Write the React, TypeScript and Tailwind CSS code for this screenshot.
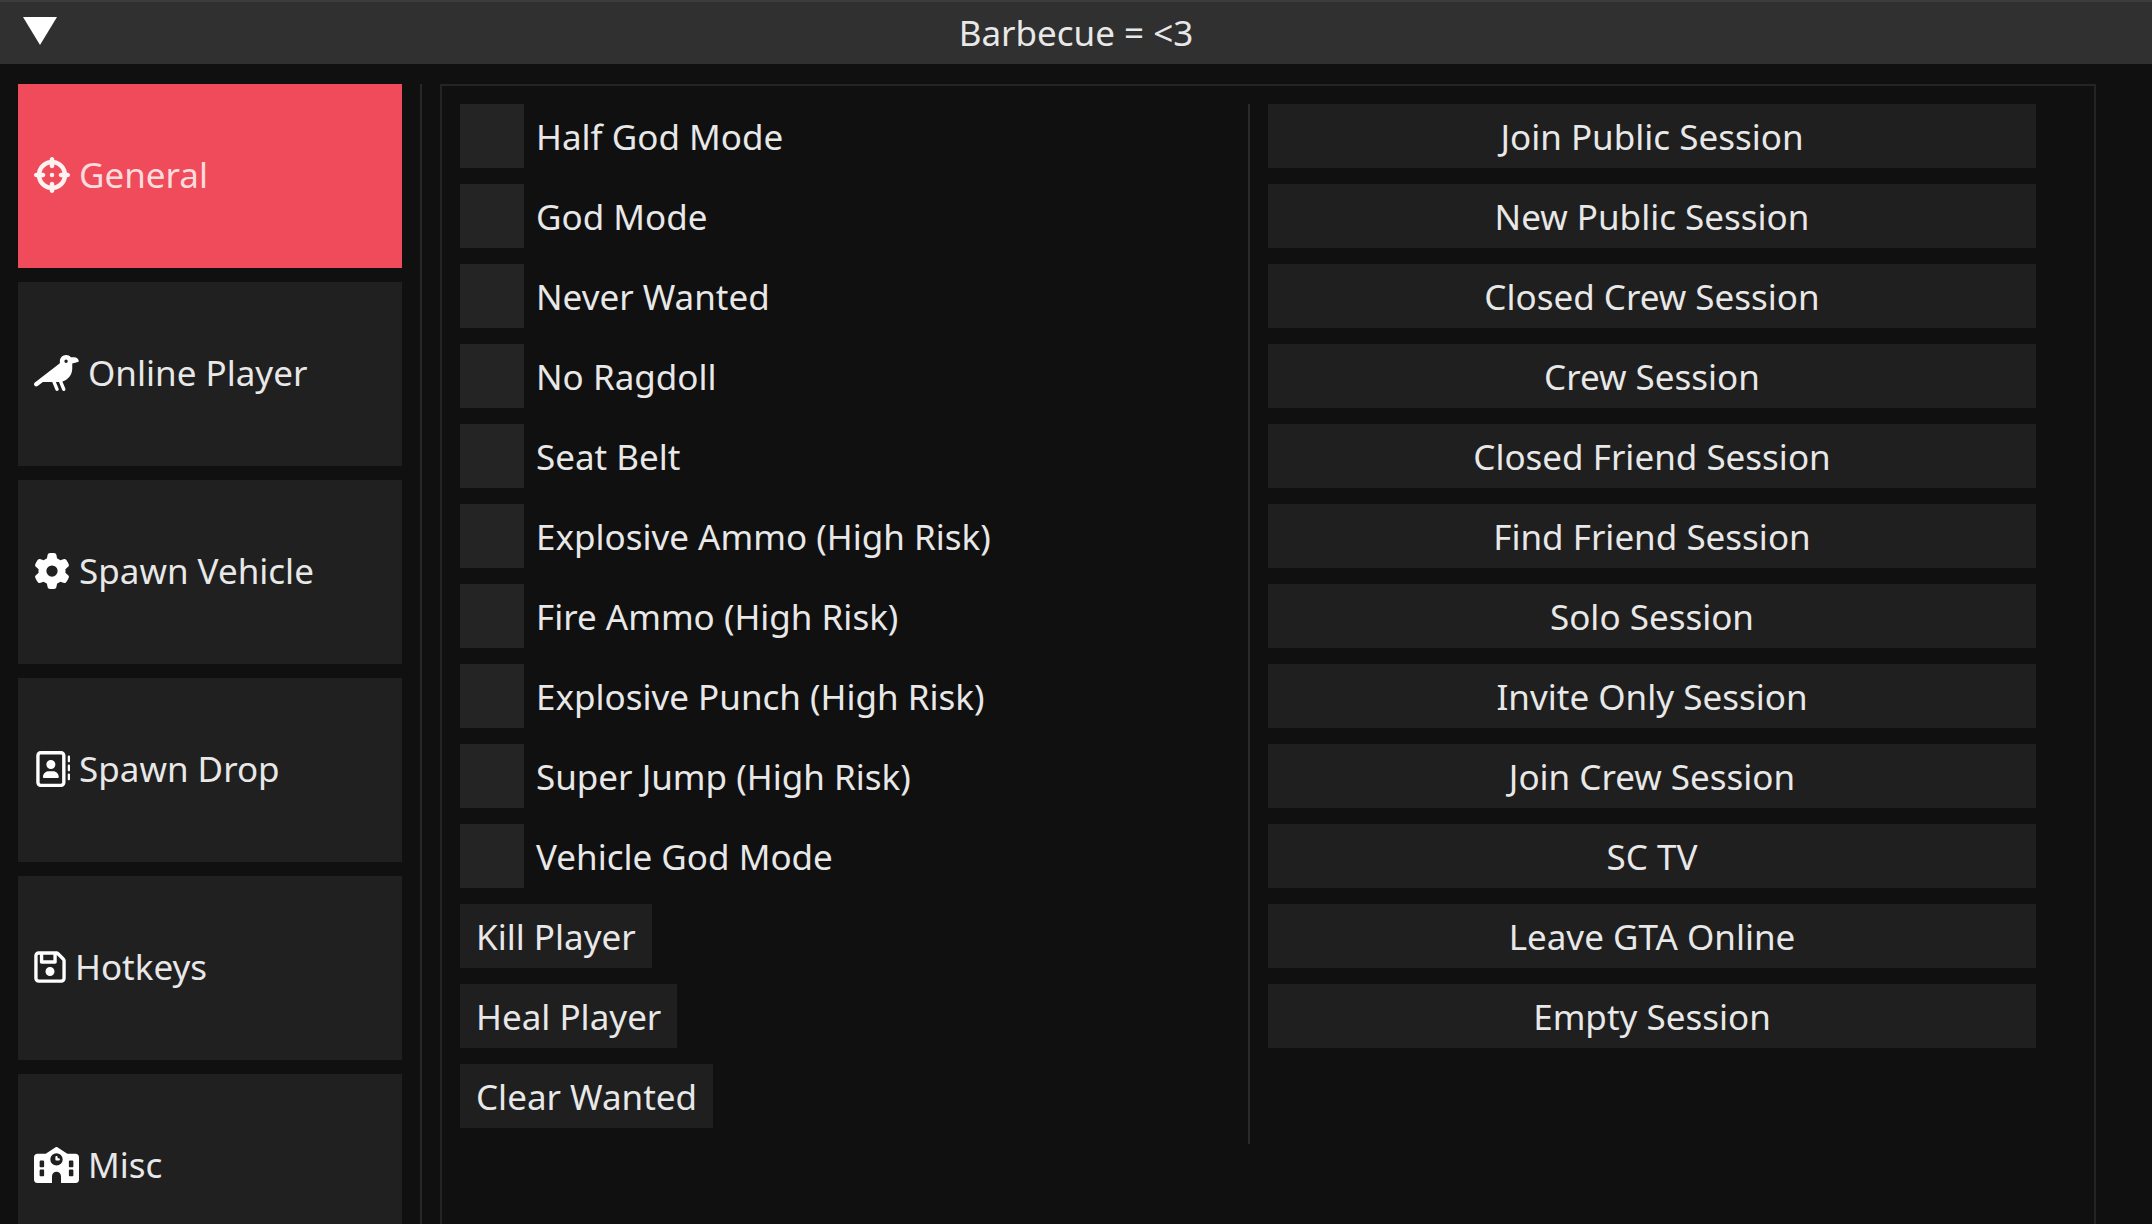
import { useState } from 'react'
import {
  FaCrosshairs,
  FaCrow,
  FaGear,
  FaRegAddressBook,
  FaRegFloppyDisk,
  FaSchool,
} from 'react-icons/fa6'

const tabs = [
  { name: 'General', icon: FaCrosshairs, size: 'h-9 w-9' },
  { name: 'Online Player', icon: FaCrow, size: 'h-9 w-[45px]' },
  { name: 'Spawn Vehicle', icon: FaGear, size: 'h-9 w-9' },
  { name: 'Spawn Drop', icon: FaRegAddressBook, size: 'h-9 w-9' },
  { name: 'Hotkeys', icon: FaRegFloppyDisk, size: 'h-9 w-8' },
  { name: 'Misc', icon: FaSchool, size: 'h-9 w-[45px]' },
]

const toggles = [
  'Half God Mode',
  'God Mode',
  'Never Wanted',
  'No Ragdoll',
  'Seat Belt',
  'Explosive Ammo (High Risk)',
  'Fire Ammo (High Risk)',
  'Explosive Punch (High Risk)',
  'Super Jump (High Risk)',
  'Vehicle God Mode',
]

const actions = ['Kill Player', 'Heal Player', 'Clear Wanted']

const sessions = [
  'Join Public Session',
  'New Public Session',
  'Closed Crew Session',
  'Crew Session',
  'Closed Friend Session',
  'Find Friend Session',
  'Solo Session',
  'Invite Only Session',
  'Join Crew Session',
  'SC TV',
  'Leave GTA Online',
  'Empty Session',
]

function App() {
  const [active, setActive] = useState('General')

  return (
    <div className="h-screen flex flex-col overflow-hidden bg-[#101010] text-[#e8e8e8] text-[35px] leading-[48px] font-['Noto_Sans',sans-serif]">

      {/* Title bar */}
      <header className="grid grid-cols-[1fr_auto_1fr] items-center h-16 shrink-0 border-t-2 border-[#3d3d3d] bg-[#303030]">
        <button aria-label="Collapse" className="ml-[23px] mb-1 justify-self-start text-white">
          <svg viewBox="0 0 34 28" className="block w-[34px] h-7 fill-current">
            <path d="M0 0H34L17 28Z" />
          </svg>
        </button>
        <h1>Barbecue = &lt;3</h1>
      </header>

      <div className="flex flex-1 min-h-0 pt-5 pl-[18px] pr-14">

        {/* Tabs */}
        <nav className="flex flex-col gap-[14px] w-96 shrink-0">
          {tabs.map(({ name, icon: Icon, size }) => (
            <button
              key={name}
              onClick={() => setActive(name)}
              className={active === name
                ? 'flex items-center gap-[9px] h-[184px] shrink-0 px-4 pb-[2px] bg-[#ef4b5b] text-[#fbdcdc]'
                : 'flex items-center gap-[9px] h-[184px] shrink-0 px-4 pb-[2px] bg-[#202020] hover:bg-[#2a2a2a]'}
            >
              <Icon className={`${size} brightness-110`} />
              {name}
            </button>
          ))}
        </nav>

        <div className="w-[2px] mx-[18px] shrink-0 bg-[#282828]" />

        {/* Panel */}
        <main className="grid grid-cols-2 items-start content-start flex-1 pt-[18px] pl-[18px] pr-[58px] border-2 border-b-0 border-[#242424]">
          <div className="flex flex-col items-start gap-4">
            {toggles.map((label) => (
              <label key={label} className="flex items-center gap-3 h-16">
                <input
                  type="checkbox"
                  className="appearance-none size-16 bg-[#242424] checked:bg-[#ef4b5b]"
                />
                <span className="pt-[2px]">{label}</span>
              </label>
            ))}
            {actions.map((label) => (
              <button key={label} className="h-16 px-4 pt-[2px] bg-[#1f1f1f] hover:bg-[#2a2a2a]">
                {label}
              </button>
            ))}
          </div>

          <div className="flex flex-col gap-4 self-stretch pl-[18px] pb-24 border-l-2 border-[#2a2a2a]">
            {sessions.map((label) => (
              <button key={label} className="h-16 pt-[2px] bg-[#1f1f1f] hover:bg-[#2a2a2a]">
                {label}
              </button>
            ))}
          </div>
        </main>

      </div>
    </div>
  )
}

export default App
